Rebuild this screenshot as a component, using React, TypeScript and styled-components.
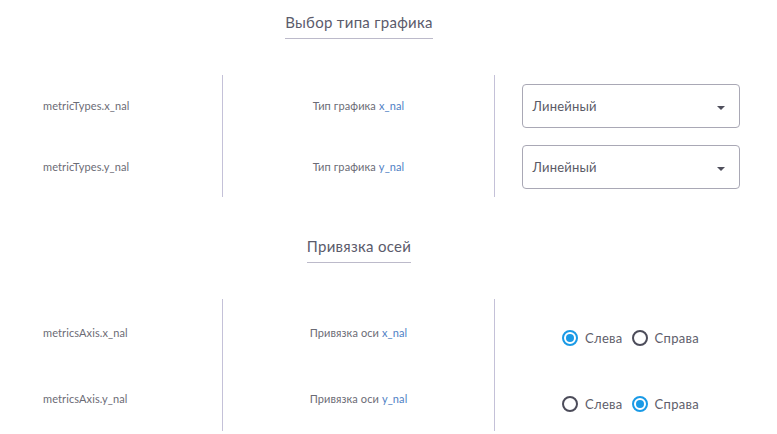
import React from "react";
import styled, { createGlobalStyle } from "styled-components";

const GlobalStyle = createGlobalStyle`
  body {
    margin: 0;
    background: #fff;
    font-family: Lato, "Open Sans", sans-serif;
  }
`;

const Page = styled.div`
  width: 766px;
`;

const Section = styled.section<{ $rowHeight: number }>`
  --row: ${(p) => p.$rowHeight}px;
  margin-bottom: 27px;
`;

const TitleRow = styled.div`
  width: 718px;
  display: flex;
  justify-content: center;
  padding-top: 12px;
  margin-bottom: 36px;
`;

const Title = styled.h2`
  margin: 0;
  padding-bottom: 6px;
  border-bottom: 1px solid #bcbaca;
  font-size: 15px;
  line-height: 20px;
  font-weight: 400;
  letter-spacing: 0.3px;
  color: #5b5b6b;
`;

const Grid = styled.div`
  display: grid;
  grid-template-columns: 222px 272px 272px;
  grid-auto-rows: var(--row);
`;

const NameCell = styled.div`
  display: flex;
  align-items: center;
  padding-left: 43px;
  font-size: 11px;
  letter-spacing: 0.1px;
  color: #6b6b75;
`;

const LabelCell = styled.div`
  display: flex;
  align-items: center;
  justify-content: center;
  border-left: 1px solid #c4c1d8;
  font-size: 11px;
  letter-spacing: 0.1px;
  color: #6b6b75;
`;

const Key = styled.span`
  color: #4f7fc4;
  margin-left: 3px;
`;

const ControlCell = styled.div<{ $shift?: number }>`
  display: flex;
  align-items: center;
  justify-content: center;
  border-left: 1px solid #c4c1d8;
  padding-top: ${(p) => p.$shift ?? 0}px;
`;

const Select = styled.div`
  box-sizing: border-box;
  width: 218px;
  height: 44px;
  display: flex;
  align-items: center;
  justify-content: space-between;
  padding: 0 14px 0 10px;
  border: 1px solid #a9a8b5;
  border-radius: 4px;
  font-size: 13px;
  letter-spacing: 0.2px;
  color: #5a5a66;
`;

const Caret = styled.span`
  width: 0;
  height: 0;
  margin-top: 4px;
  border-left: 4px solid transparent;
  border-right: 4px solid transparent;
  border-top: 4px solid #4f4f5c;
`;

const RadioGroup = styled.div`
  display: flex;
  align-items: center;
  gap: 9px;
`;

const Option = styled.label`
  display: flex;
  align-items: center;
  gap: 7px;
  font-size: 13px;
  letter-spacing: 0.3px;
  color: #5e5e6b;
`;

const Circle = styled.span<{ $on: boolean }>`
  box-sizing: border-box;
  width: 16px;
  height: 16px;
  border-radius: 50%;
  border: 2px solid ${(p) => (p.$on ? "#1a9ae6" : "#4c4c5a")};
  display: flex;
  align-items: center;
  justify-content: center;
  &::after {
    content: "";
    width: 8px;
    height: 8px;
    border-radius: 50%;
    background: ${(p) => (p.$on ? "#1a9ae6" : "transparent")};
  }
`;

const axes = ["x_nal", "y_nal"];

const Radio = ({ on, label }: { on: boolean; label: string }) => (
  <Option>
    <Circle $on={on} />
    {label}
  </Option>
);

export default function App() {
  return (
    <Page>
      <GlobalStyle />
      <Section $rowHeight={61}>
        <TitleRow>
          <Title>Выбор типа графика</Title>
        </TitleRow>
        <Grid>
          {axes.map((a) => (
            <React.Fragment key={a}>
              <NameCell>metricTypes.{a}</NameCell>
              <LabelCell>
                Тип графика<Key>{a}</Key>
              </LabelCell>
              <ControlCell>
                <Select>
                  Линейный
                  <Caret />
                </Select>
              </ControlCell>
            </React.Fragment>
          ))}
        </Grid>
      </Section>
      <Section $rowHeight={66}>
        <TitleRow>
          <Title>Привязка осей</Title>
        </TitleRow>
        <Grid>
          {axes.map((a, i) => (
            <React.Fragment key={a}>
              <NameCell>metricsAxis.{a}</NameCell>
              <LabelCell>
                Привязка оси<Key>{a}</Key>
              </LabelCell>
              <ControlCell $shift={12}>
                <RadioGroup>
                  <Radio on={i === 0} label="Слева" />
                  <Radio on={i === 1} label="Справа" />
                </RadioGroup>
              </ControlCell>
            </React.Fragment>
          ))}
        </Grid>
      </Section>
    </Page>
  );
}
